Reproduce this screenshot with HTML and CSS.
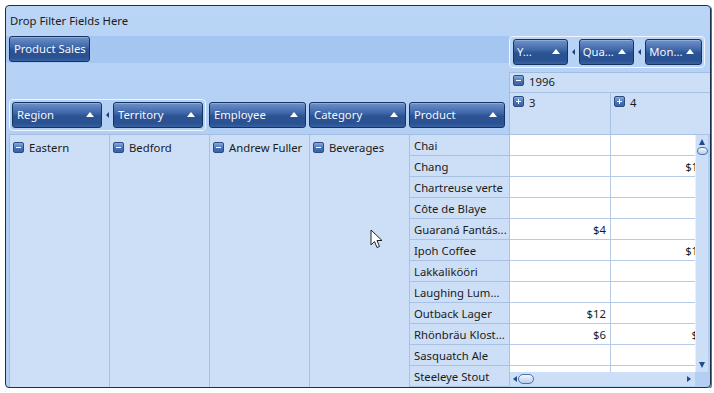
FILE: index.html
```html
<!DOCTYPE html>
<html lang="en">

<head>
    <meta charset="UTF-8">
    <meta name="viewport" content="width=device-width, initial-scale=1.0">
    <title>Pivot Grid</title>
    <link rel="stylesheet" href="styles.css">
</head>

<body>
    <div class="pivot">
        <div class="filter-zone">Drop Filter Fields Here</div>
        <div class="main">
            <div class="left">
                <div class="data-zone">
                    <div class="field">Product Sales</div>
                </div>
                <div class="row-zone">
                    <div class="group">
                        <div class="field w90">Region<span class="sort"></span></div>
                        <span class="link"></span>
                        <div class="field w90">Territory<span class="sort"></span></div>
                    </div>
                    <div class="field w97">Employee<span class="sort"></span></div>
                    <div class="field w97">Category<span class="sort"></span></div>
                    <div class="field w96">Product<span class="sort"></span></div>
                </div>
                <div class="row-headers">
                    <div class="rh"><span class="exp minus"></span>Eastern</div>
                    <div class="rh"><span class="exp minus"></span>Bedford</div>
                    <div class="rh"><span class="exp minus"></span>Andrew Fuller</div>
                    <div class="rh"><span class="exp minus"></span>Beverages</div>
                    <div class="products">
                        <div class="prod">Chai</div>
                        <div class="prod">Chang</div>
                        <div class="prod">Chartreuse verte</div>
                        <div class="prod">Côte de Blaye</div>
                        <div class="prod">Guaraná Fantás...</div>
                        <div class="prod">Ipoh Coffee</div>
                        <div class="prod">Lakkalikööri</div>
                        <div class="prod">Laughing Lum...</div>
                        <div class="prod">Outback Lager</div>
                        <div class="prod">Rhönbräu Klost...</div>
                        <div class="prod">Sasquatch Ale</div>
                        <div class="prod">Steeleye Stout</div>
                    </div>
                </div>
            </div>
            <div class="right">
                <div class="col-zone">
                    <div class="group">
                        <div class="field w55">Y...<span class="sort"></span></div>
                        <span class="link"></span>
                        <div class="field w56">Qua...<span class="sort"></span></div>
                        <span class="link"></span>
                        <div class="field w57">Mon...<span class="sort"></span></div>
                    </div>
                </div>
                <div class="col-headers">
                    <div class="year"><span class="exp minus"></span>1996</div>
                    <div class="quarters">
                        <div class="qh"><span class="exp plus"></span>3</div>
                        <div class="qh"><span class="exp plus"></span>4</div>
                    </div>
                </div>
                <div class="data">
                    <div class="cells-wrap">
                        <div class="cells">
                            <div class="row"><div class="cell"></div><div class="cell"></div></div>
                            <div class="row"><div class="cell"></div><div class="cell">$184</div></div>
                            <div class="row"><div class="cell"></div><div class="cell"></div></div>
                            <div class="row"><div class="cell"></div><div class="cell"></div></div>
                            <div class="row"><div class="cell">$4</div><div class="cell"></div></div>
                            <div class="row"><div class="cell"></div><div class="cell">$184</div></div>
                            <div class="row"><div class="cell"></div><div class="cell"></div></div>
                            <div class="row"><div class="cell"></div><div class="cell"></div></div>
                            <div class="row"><div class="cell">$12</div><div class="cell"></div></div>
                            <div class="row"><div class="cell">$6</div><div class="cell">$17</div></div>
                            <div class="row"><div class="cell"></div><div class="cell"></div></div>
                            <div class="row"><div class="cell"></div><div class="cell"></div></div>
                        </div>
                        <div class="hscroll">
                            <span class="arr-left"></span>
                            <span class="thumb"></span>
                            <span class="hspace"></span>
                            <span class="arr-right"></span>
                        </div>
                    </div>
                    <div class="vscroll">
                        <span class="arr-up"></span>
                        <span class="thumb"></span>
                        <span class="vspace"></span>
                        <span class="arr-down"></span>
                    </div>
                </div>
            </div>
        </div>
    </div>

    <svg class="cursor" width="14" height="21" viewBox="0 0 14 21">
        <path d="M1 1 L1 16 L4.5 12.5 L7 18.5 L9.5 17.5 L7 11.5 L12 11.5 Z" fill="#fff" stroke="#222" stroke-width="1" stroke-linejoin="round"/>
    </svg>
</body>

</html>
```

FILE: styles.css
```css
body{
    margin: 0;
    background: #fff;
    font-family: "Noto Sans", "Segoe UI", sans-serif;
    font-size: 11.3px;
    color: #1b1b1b;
}
.pivot{
    margin: 5px 0 0 5px;
    width: 704px;
    height: 381px;
    border: 1px solid #1d2e4b;
    border-radius: 4px;
    box-shadow: 1px 1px 0 #5a6d8e;
    background: linear-gradient(#bad5f6, #b0cdf3 45%, #b3cff3);
    overflow: hidden;
}
.filter-zone{
    height: 30px;
    line-height: 29px;
    padding-left: 4px;
}
.main{
    display: flex;
}
.left{
    width: 503px;
}
.right{
    width: 201px;
}

/* field buttons */
.field{
    height: 26px;
    box-sizing: border-box;
    border: 1px solid #17335f;
    border-radius: 3px;
    background: linear-gradient(#6d91ca 0%, #4168a8 40%, #2b5292 55%, #2a5192 85%, #3a62a2 100%);
    box-shadow: inset 0 1px 0 rgba(255,255,255,0.25);
    color: #f4f7fc;
    display: flex;
    align-items: center;
    justify-content: space-between;
    padding: 0 4px 1px 4px;
    white-space: nowrap;
    overflow: hidden;
}
.data-zone .field{
    display: inline-flex;
    width: 81px;
}
.w90{ width: 90px; }
.w97{ width: 97px; }
.w96{ width: 96px; }
.w55{ width: 55px; }
.w56{ width: 56px; }
.w57{ width: 57px; }
.sort{
    flex: none;
    width: 0;
    height: 0;
    margin-right: 3px;
    border-left: 4px solid transparent;
    border-right: 4px solid transparent;
    border-bottom: 5px solid #fff;
}
.link{
    width: 11px;
    display: flex;
    justify-content: center;
}
.link::before{
    content: "";
    width: 0;
    height: 0;
    border-top: 3px solid transparent;
    border-bottom: 3px solid transparent;
    border-right: 3px solid #1d3f77;
}
.group{
    display: flex;
    align-items: center;
    padding: 2px;
    border: 1px solid #eef5fe;
    border-radius: 4px;
}

.data-zone{
    height: 27px;
    padding-left: 3px;
    background: #a5c6f1;
}
.row-zone{
    margin-top: 36px;
    height: 32px;
    padding-left: 3px;
    display: flex;
    align-items: center;
    gap: 3px;
}
.row-headers{
    margin: 3px 0 0 3px;
    height: 252px;
    border-top: 1px solid #a3bde2;
    border-left: 1px solid #a3bde2;
    display: grid;
    grid-template-columns: 99px 99px 99px 99px 99px;
    column-gap: 1px;
    background: #a9c1e3;
}
.rh, .products{
    background: #cddff6;
}
.rh{
    display: flex;
    align-items: flex-start;
    padding: 3px 0 0 3px;
    line-height: 20px;
    white-space: nowrap;
}
.prod{
    height: 20px;
    line-height: 21px;
    padding-left: 4px;
    border-bottom: 1px solid #a9c1e3;
    white-space: nowrap;
}

/* expand icons */
.exp{
    width: 11px;
    height: 11px;
    box-sizing: border-box;
    border: 1px solid #2b4c82;
    border-radius: 2px;
    background: linear-gradient(#89a9dc, #4a73b4 55%, #3a63a5);
    margin: 4px 5px 0 0;
    position: relative;
    flex: none;
}
.exp::before{
    content: "";
    position: absolute;
    left: 2px;
    top: 4px;
    width: 5px;
    height: 1px;
    background: #fff;
}
.plus::after{
    content: "";
    position: absolute;
    left: 4px;
    top: 2px;
    width: 1px;
    height: 5px;
    background: #fff;
}

/* column area */
.col-zone{
    height: 32px;
    display: flex;
}
.col-zone .group{
    width: 196px;
    box-sizing: border-box;
    padding: 2px 2px 2px 3px;
}
.col-zone .field{
    padding-left: 3px;
}
.col-headers{
    margin-top: 4px;
    border-top: 1px solid #a3bde2;
    border-left: 1px solid #a3bde2;
    background: #cddff6;
}
.year{
    height: 19px;
    display: flex;
    align-items: flex-start;
    padding-left: 3px;
    line-height: 18px;
    border-bottom: 1px solid #a9c1e3;
}
.qh{
    width: 97px;
    flex: none;
    padding: 1px 0 0 3px;
    display: flex;
    align-items: flex-start;
    line-height: 18px;
    border-right: 1px solid #a9c1e3;
}
.year .exp, .qh .exp{
    margin-top: 2px;
}
.quarters{
    display: flex;
    height: 41px;
    border-bottom: 1px solid #a9c1e3;
}
.data{
    display: flex;
}
.cells-wrap{
    width: 185px;
    border-left: 1px solid #a9c1e3;
    overflow: hidden;
}
.cells{
    height: 237px;
    overflow: hidden;
    background: #fff;
}
.row{
    display: flex;
    width: 202px;
}
.cell{
    width: 96px;
    height: 20px;
    line-height: 21px;
    padding-right: 4px;
    text-align: right;
    border-right: 1px solid #b6cae7;
    border-bottom: 1px solid #b6cae7;
    flex: none;
}
.cell + .cell{
    padding-right: 0;
    width: 100px;
}

/* scrollbars */
.hscroll{
    height: 14px;
    display: flex;
    align-items: center;
    padding: 0 4px 0 3px;
    background: #cddff6;
}
.vscroll{
    width: 13px;
    height: 237px;
    display: flex;
    flex-direction: column;
    align-items: center;
    background: #cddff6;
    border-left: 1px solid #e6effb;
    box-sizing: border-box;
}
.hspace, .vspace{
    flex: 1;
}
.thumb{
    flex: none;
    box-sizing: border-box;
    border: 1px solid #4b73ae;
    border-radius: 6px;
    background: linear-gradient(#f3f7fd, #b9cdea);
}
.hscroll .thumb{
    width: 16px;
    height: 10px;
    margin-left: 1px;
}
.vscroll .thumb{
    width: 11px;
    height: 8px;
    margin-top: 2px;
}
.arr-left, .arr-right, .arr-up, .arr-down{
    width: 0;
    height: 0;
    flex: none;
}
.arr-left{
    border-top: 3px solid transparent;
    border-bottom: 3px solid transparent;
    border-right: 4px solid #1f4c8e;
}
.arr-right{
    border-top: 3px solid transparent;
    border-bottom: 3px solid transparent;
    border-left: 4px solid #1f4c8e;
}
.arr-up{
    margin-top: 4px;
    border-left: 3px solid transparent;
    border-right: 3px solid transparent;
    border-bottom: 6px solid #1f4c8e;
}
.arr-down{
    margin-bottom: 4px;
    border-left: 3px solid transparent;
    border-right: 3px solid transparent;
    border-top: 6px solid #1f4c8e;
}

.cursor{
    position: absolute;
    left: 370px;
    top: 229px;
}
```
